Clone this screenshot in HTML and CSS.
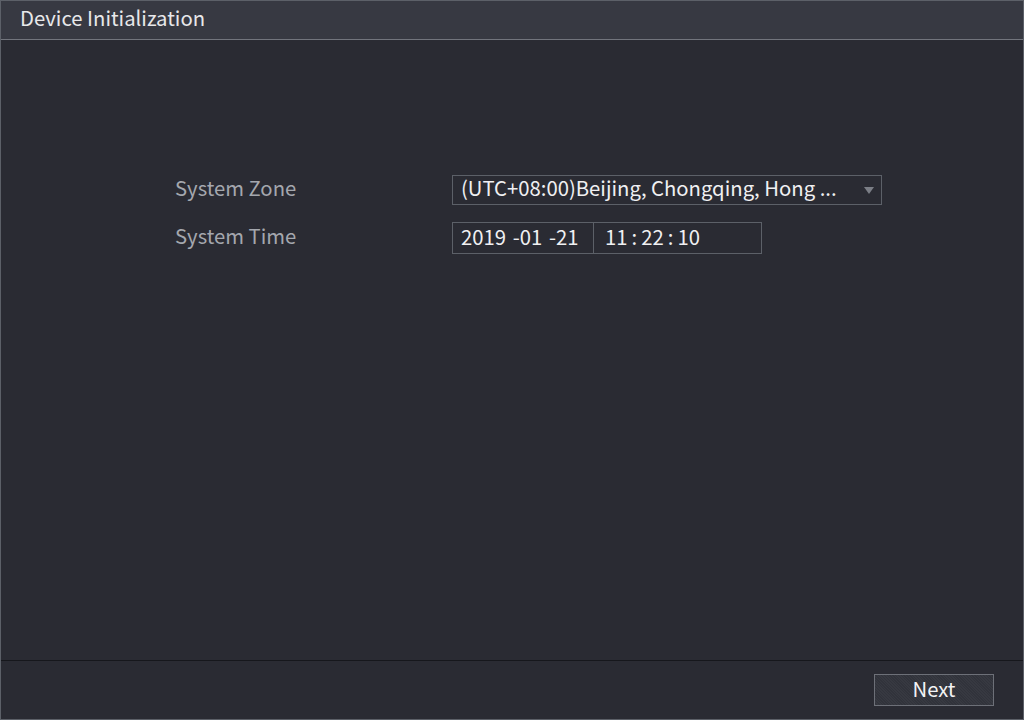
FILE: index.html
```html
<!DOCTYPE html>
<html>
<head>
<meta charset="utf-8">
<link rel="stylesheet" href="styles.css">
</head>
<body>
<div class="window">
  <div class="header"><span class="title">Device Initialization</span></div>
  <div class="content">
    <div class="form">
      <div class="row">
        <div class="label"><span class="txt">System Zone</span></div>
        <div class="select">
          <span class="txt select-text">(UTC+08:00)Beijing, Chongqing, Hong ...</span>
          <span class="arrow"></span>
        </div>
      </div>
      <div class="row row-time">
        <div class="label"><span class="txt">System Time</span></div>
        <div class="timebox">
          <div class="date"><span class="txt">2019 &nbsp;-01 &nbsp;-21</span></div>
          <div class="time"><span class="txt">11 : 22 : 10</span></div>
        </div>
      </div>
    </div>
  </div>
  <div class="footer">
    <button class="btn"><span class="txt">Next</span></button>
  </div>
</div>
</body>
</html>
```
FILE: styles.css
```css
html, body {
  margin: 0;
  padding: 0;
  background: #2a2b33;
}
.window {
  width: 1024px;
  height: 720px;
  box-sizing: border-box;
  border: 1px solid #5c6068;
  display: flex;
  flex-direction: column;
  font-family: "Noto Sans CJK SC", "Noto Sans", sans-serif;
  font-size: 20.3px;
  background: #2a2b33;
}
.txt {
  position: relative;
  top: -3px;
  white-space: nowrap;
}
.header {
  height: 38px;
  background: #373942;
  border-bottom: 1px solid #72757d;
  color: #e8e8ea;
  line-height: 38px;
  padding-left: 19px;
  flex: none;
}
.title {
  position: relative;
  top: -3px;
}
.content {
  flex: 1;
  padding-top: 135px;
  padding-left: 174px;
}
.row {
  display: flex;
  align-items: center;
  height: 30px;
}
.row-time {
  margin-top: 17px;
  height: 32px;
}
.label {
  width: 277px;
  color: #a4a7ae;
}
.select {
  width: 413px;
  height: 28px;
  border: 1px solid #5c6068;
  display: flex;
  align-items: center;
  justify-content: space-between;
  padding-left: 8px;
  padding-right: 7px;
  color: #f0f0f2;
}
.arrow {
  width: 0;
  height: 0;
  border-left: 5px solid transparent;
  border-right: 5px solid transparent;
  border-top: 7px solid #7b7e86;
}
.timebox {
  width: 308px;
  height: 30px;
  border: 1px solid #5c6068;
  display: flex;
  color: #f0f0f2;
}
.date {
  width: 132px;
  padding-left: 8px;
  border-right: 1px solid #5c6068;
  line-height: 32px;
  white-space: nowrap;
  word-spacing: -1.2px;
}
.time {
  padding-left: 11px;
  line-height: 32px;
  white-space: nowrap;
  word-spacing: -0.5px;
}
.footer {
  height: 59px;
  flex: none;
  border-top: 1px solid #16171c;
  display: flex;
  justify-content: flex-end;
  align-items: flex-start;
  padding-top: 13px;
  padding-right: 29px;
  box-sizing: border-box;
}
.btn {
  width: 120px;
  height: 32px;
  border: 1px solid #6d7078;
  background-color: #31333b;
  background-image: repeating-linear-gradient(45deg, rgba(255,255,255,0.03) 0 1px, transparent 1px 2px);
  color: #f2f2f4;
  font-family: "Noto Sans CJK SC", "Noto Sans", sans-serif;
  font-size: 20.3px;
  padding: 0;
  line-height: 30px;
}
.btn .txt {
  top: -2px;
}
```
